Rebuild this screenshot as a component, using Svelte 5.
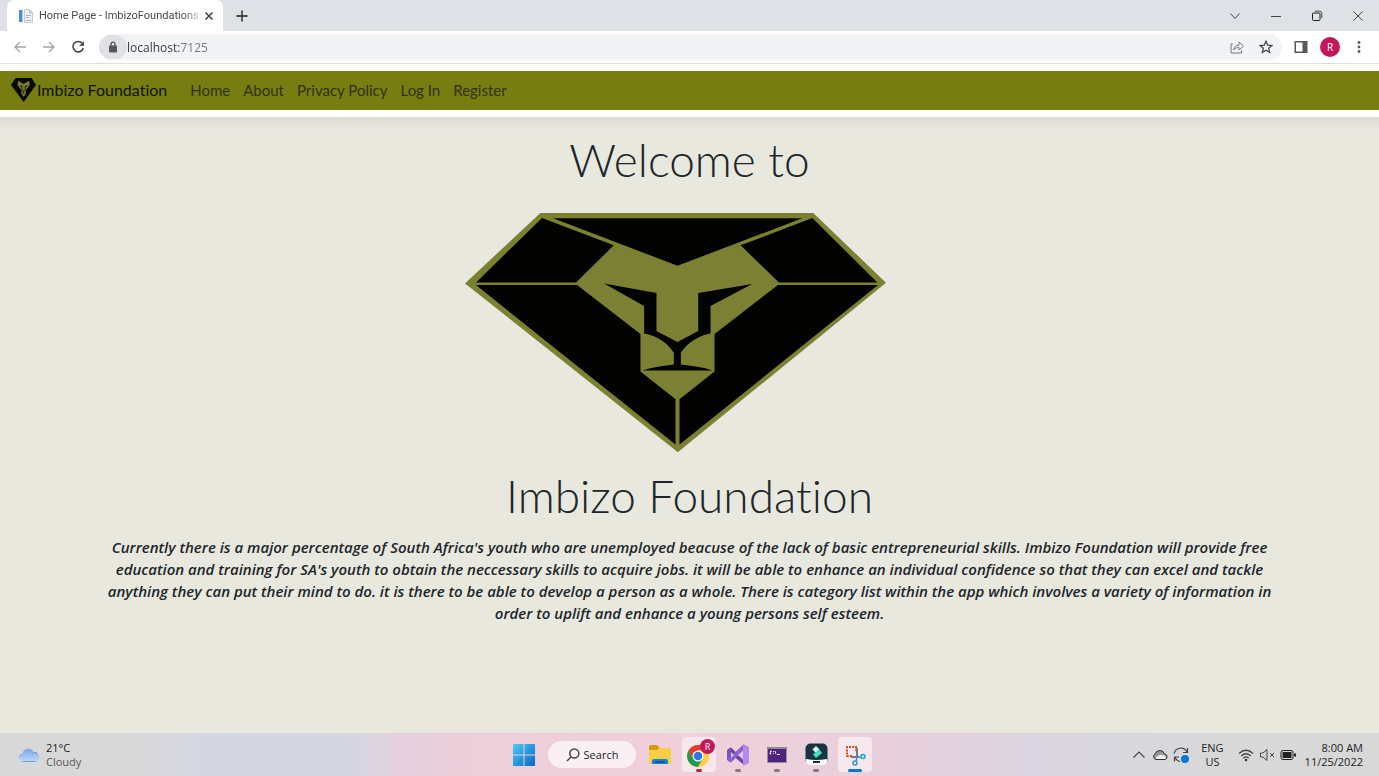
<script lang="ts">
  const links = ['Home', 'About', 'Privacy Policy', 'Log In', 'Register'];
  let address = $state('localhost:7125');
</script>

{#snippet features()}
  <path
    fill="#020300"
    d="M463 460L620 489V603L683 636L745 603V489L907 462L782 528V610C745 617 713 637 693 668V703C725 706 760 711 789 721H578C608 711 640 706 672 703V668C653 637 621 617 583 610V528Z"
  />
{/snippet}

<div class="screen">
  <header class="browser">
    <div class="tabs">
      <div class="tab">
        <svg width="16" height="16" viewBox="0 0 16 16" aria-hidden="true">
          <path fill="#3d93d5" d="M1 2h3v12H1z" /><path fill="#a9cdea" d="M4 2h1v12H4z" />
          <path fill="#eef1f4" stroke="#c6ccd2" d="M6.500 1.500h5l3 3v10h-8z" />
          <path fill="none" stroke="#aab4bf" d="M11.500 2v3h3M8 7.500h5M8 9.500h3M8 12.500h5" />
        </svg>
        <span class="title">Home Page - ImbizoFoundations</span>
        <button aria-label="Close tab">
          <svg width="10" height="10" viewBox="0 0 10 10"><path class="line" stroke-width="1.600" d="M1.500 1.500l7 7M8.500 1.500l-7 7" /></svg>
        </button>
      </div>
      <button class="plus" aria-label="New tab">
        <svg width="14" height="14" viewBox="0 0 14 14"><path class="line" stroke-width="1.800" d="M7 1.500v11M1.500 7h11" /></svg>
      </button>
      <div class="window">
        <button aria-label="Search tabs"><svg width="12" height="12" viewBox="0 0 12 12"><path class="line" d="M1.500 3.500L6 8.500l4.500-5" /></svg></button>
        <button aria-label="Minimize"><svg width="12" height="12" viewBox="0 0 12 12"><path class="line" d="M1 6.500h10" /></svg></button>
        <button aria-label="Restore"><svg width="12" height="12" viewBox="0 0 12 12"><rect class="line dark" x="1.500" y="3" width="7.500" height="7.500" rx="1" /><path class="line" d="M4 1.200h4.500q2.300 0 2.300 2.300V8" /></svg></button>
        <button aria-label="Close window"><svg width="12" height="12" viewBox="0 0 12 12"><path class="line" d="M1.500 1.500l9 9M10.500 1.500l-9 9" /></svg></button>
      </div>
    </div>

    <div class="toolbar">
      <button class="faded" aria-label="Back"><svg width="14" height="14" viewBox="0 0 14 14"><path class="line" stroke-width="1.300" d="M13 7H2M7 2L2 7l5 5" /></svg></button>
      <button class="faded" aria-label="Forward"><svg width="14" height="14" viewBox="0 0 14 14"><path class="line" stroke-width="1.300" d="M1 7h11M7 2l5 5-5 5" /></svg></button>
      <button aria-label="Reload">
        <svg width="14" height="14" viewBox="0 0 14 14"><path class="line" stroke-width="1.600" d="M11.300 3.500A5.200 5.200 0 1 0 12.200 8" /><path fill="#55585c" d="M13 1v5H8z" /></svg>
      </button>
      <div class="omnibox">
        <button class="lock" aria-label="Site information">
          <svg width="10" height="12" viewBox="0 0 10 12"><rect x="1" y="4.500" width="8" height="7" rx="1" fill="#55585c" /><path class="line" stroke-width="1.200" d="M3 5V3.200a2 2 0 0 1 4 0V5" /></svg>
        </button>
        <input aria-label="Address" bind:value={address} spellcheck="false" />
        <button aria-label="Share">
          <svg width="14" height="14" viewBox="0 0 14 14"><path class="line soft" d="M3 4H1v9h10.500v-3M3.500 10C4 6.500 6 5.300 9 5.200V2L13.500 6 9 10V7.500C6.500 7.500 5 8.200 3.500 10z" /></svg>
        </button>
        <button aria-label="Bookmark">
          <svg width="14" height="14" viewBox="0 0 14 14"><path class="line" stroke-width="1.300" d="M7 1.300l1.700 3.800 4.200.4-3.200 2.800.9 4.100L7 10.300l-3.600 2.100.9-4.100L1.100 5.500l4.200-.4z" /></svg>
        </button>
      </div>
      <button aria-label="Side panel">
        <svg width="14" height="14" viewBox="0 0 14 14"><path fill="#55585c" fill-rule="evenodd" d="M.5 1h13v12H.5zM2 2.500v9h6.500v-9z" /></svg>
      </button>
      <button class="avatar" aria-label="Profile">R</button>
      <button aria-label="Menu">
        <svg width="14" height="14" viewBox="0 0 14 14"><g fill="#55585c"><circle cx="7" cy="2.500" r="1.400" /><circle cx="7" cy="7" r="1.400" /><circle cx="7" cy="11.500" r="1.400" /></g></svg>
      </button>
    </div>
  </header>

  <nav>
    <a class="brand" href="#home">
      <svg width="25" height="24" viewBox="46 249 1262 717" preserveAspectRatio="none" aria-hidden="true">
        <path fill="#080a02" d="M272 249H1090L1308 458L684 966L46 460Z" />
        <path fill="#7c8033" d="M400 330L683 430L960 330L987 460L794 612V724L684 810L572 724V612L379 460Z" />
        {@render features()}
      </svg>
      <span>Imbizo Foundation</span>
    </a>
    {#each links as link}
      <a href="#{link.toLowerCase().replace(' ', '-')}">{link}</a>
    {/each}
  </nav>

  <main>
    <h1>Welcome to</h1>
    <svg class="logo" viewBox="46 249 1262 717" role="img" aria-label="Imbizo lion">
      <path fill="#7c8033" d="M272 249H1090L1308 458L684 966L46 460Z" />
      <g fill="#020300">
        <path d="M277 264L492 346L379 457H79Z" />
        <path d="M310 265H1057L683 407Z" />
        <path d="M1087 264L872 346L987 457H1282Z" />
        <path d="M79 465H382L572 612V724L677 807V943Z" />
        <path d="M1284 465H984L794 612V724L689 807V943Z" />
      </g>
      {@render features()}
    </svg>
    <h1>Imbizo Foundation</h1>
    <p>
      Currently there is a major percentage of South Africa's youth who are unemployed beacuse of the lack of basic
      entrepreneurial skills. Imbizo Foundation will provide free education and training for SA's youth to obtain the
      neccessary skills to acquire jobs. it will be able to enhance an individual confidence so that they can excel and
      tackle anything they can put their mind to do. it is there to be able to develop a person as a whole. There is
      category list within the app which involves a variety of information in order to uplift and enhance a young
      persons self esteem.
    </p>
  </main>

  <footer>
    <button class="weather">
      <svg width="22" height="16" viewBox="0 0 22 16" aria-hidden="true">
        <defs><linearGradient id="cloud" x2="0" y2="1"><stop stop-color="#77a5ea" /><stop offset="1" stop-color="#c3daf8" /></linearGradient></defs>
        <path fill="url(#cloud)" d="M5 15a4.300 4.300 0 0 1-.5-8.600A6 6 0 0 1 15.700 5 5 5 0 1 1 17 15z" />
        <path fill="none" stroke="#6d9be6" d="M4 14.500h13.500M14 6.500q2-2 5-.5" />
      </svg>
      <span>21°C<br /><small>Cloudy</small></span>
    </button>

    <div class="apps">
      <button aria-label="Start">
        <svg width="22" height="22" viewBox="0 0 22 22">
          <defs><linearGradient id="win" x2="1" y2="1"><stop stop-color="#4ccbf5" /><stop offset="1" stop-color="#0668c5" /></linearGradient></defs>
          <path fill="url(#win)" d="M1 0h9.500v10.500H0V1q0-1 1-1zM11.500 0H21q1 0 1 1v9.500H11.500zM0 11.500h10.500V22H1q-1 0-1-1zM11.500 11.500H22V21q0 1-1 1h-9.500z" />
        </svg>
      </button>
      <button class="search">
        <svg width="14" height="14" viewBox="0 0 14 14"><circle class="line" cx="8.300" cy="5.500" r="4.500" stroke-width="1.500" /><path class="line" stroke-width="1.500" d="M5 9l-4 4" /></svg>
        Search
      </button>
      <button aria-label="File Explorer">
        <svg width="24" height="24" viewBox="0 0 24 24">
          <path fill="#d99a08" d="M1 4q0-2 2-2h6l3 3h8v5H1z" />
          <path fill="#fbcf45" d="M1 7h8l2-2h10q2 0 2 2v13q0 1-1 1H2q-1 0-1-1z" />
          <path fill="#1681d5" d="M4 21v-3q0-2 2-2h12q2 0 2 2v3z" /><path fill="#075cae" d="M7 18h10v2H7z" />
        </svg>
      </button>
      <button class="open chrome" aria-label="Chrome">
        <svg width="28" height="28" viewBox="0 0 28 28">
          <circle cx="13" cy="15" r="11" fill="#ffce43" />
          <path fill="#e33b2e" d="M3.500 9.500A11 11 0 0 1 22.500 9.500H13L8.200 17.700z" />
          <path fill="#219a50" d="M3.500 9.500A11 11 0 0 0 13 26L17.800 17.800 8.200 17.700z" />
          <path fill="#ffce43" d="M22.500 9.500A11 11 0 0 1 13 26L17.800 17.800 13 9.500z" />
          <circle cx="13" cy="15" r="5.500" fill="#fff" /><circle cx="13" cy="15" r="4.300" fill="#2879ea" />
        </svg>
        <span class="badge">R</span>
      </button>
      <button class="running" aria-label="Visual Studio">
        <svg width="24" height="24" viewBox="0 0 24 24">
          <path fill="#6b3fa5" d="M2 6l3-1.500L18 17v5L5 11 2 8z" /><path fill="#7b52b9" d="M1 7l4-2.500v15L1 17z" />
          <path fill="#8b62ca" d="M2 18l3 1.500L18 7V1L2 16z" /><path fill="#b58be9" d="M17 1l6 3v16l-6 3V17l-5-5 5-5z" />
          <path fill="#dcc8ec" d="M5 9l3 3-3 3zM17 8v8l-5-4z" />
        </svg>
      </button>
      <button class="running" aria-label="Terminal">
        <svg width="20" height="16" viewBox="0 0 20 16">
          <rect x=".5" y=".5" width="19" height="15" fill="#4f2380" stroke="#969099" /><path fill="#8d8792" d="M0 0h20v2H0z" />
          <path fill="none" stroke="#eee" d="M5 4H3.500L3 7h1.500M6.500 4v1M6.500 6v1M8 4l1 3M10 7.500h3" />
        </svg>
      </button>
      <button class="running" aria-label="Filmora">
        <svg width="23" height="23" viewBox="0 0 23 23">
          <rect x=".5" y=".5" width="22" height="21" rx="5" fill="#173541" />
          <path fill="#fff" d="M1 16q10 2 21 0v2q0 4-5 4H6q-5 0-5-4z" /><path fill="#162c36" d="M8 18h7v2H8z" />
          <path fill="#e7fffb" d="M11 3l3.500 3.500L11 10 7.500 6.500z" /><path fill="#42dfbd" d="M14 6l3 4-6 5-3-3.500z" />
        </svg>
      </button>
      <button class="open" aria-label="Snipping Tool">
        <svg width="22" height="22" viewBox="0 0 22 22">
          <path fill="none" stroke="#d64a20" stroke-width="2" stroke-dasharray="2 1.200" d="M8 12H3V3h9v4" />
          <path fill="none" stroke="#767b80" stroke-width="2" d="M13 4v10M7 13h8" />
          <g fill="none" stroke="#239bdd" stroke-width="1.500"><path d="M14 13l3 0M13 14l-1 3" /><circle cx="19" cy="12.500" r="2" /><circle cx="11" cy="19" r="2" /></g>
        </svg>
      </button>
    </div>

    <div class="tray">
      <button aria-label="Hidden icons"><svg width="16" height="16" viewBox="0 0 16 16"><path class="line" stroke-width="1.200" d="M2.500 10.500L8 5l5.500 5.500" /></svg></button>
      <button aria-label="OneDrive"><svg width="16" height="16" viewBox="0 0 16 16"><path fill="#999" stroke="#333" d="M4 12.500A3 3 0 0 1 3 7q1-3.500 5-3.500 3.500 0 4.500 3.500a2.800 2.800 0 0 1 .5 5.500z" /><path fill="#eee" d="M4 12q0-3 4-4 3-.5 5 1 2 1.500 0 3z" /></svg></button>
      <button aria-label="Updates"><svg width="16" height="16" viewBox="0 0 16 16"><path class="line" stroke-width="1.200" d="M1 6.500a7 7 0 0 1 13-1.500M14.500 1v4.500H10M7 14.500A7 7 0 0 1 2 10.500M1.500 14.500v-4.500H6" /><circle cx="12" cy="12" r="4" fill="#0878d7" /></svg></button>
      <button class="text lang">ENG<br />US</button>
      <button aria-label="Network"><svg width="16" height="16" viewBox="0 0 16 16"><path class="line" stroke-width="1.200" d="M1 6.500q7-6.500 14 0M3.200 9q4.800-4.500 9.600 0M5.300 11.200q2.700-2.500 5.400 0" /><circle cx="8" cy="13" r="1.300" fill="#333" /></svg></button>
      <button aria-label="Volume"><svg width="16" height="16" viewBox="0 0 16 16"><path class="line" d="M1.500 6h2.500l4-3.500v11L4 10H1.500zM11 6l4 4M15 6l-4 4" /></svg></button>
      <button aria-label="Battery"><svg width="16" height="16" viewBox="0 0 16 16"><rect class="line dark" x="1" y="3.500" width="12" height="9" rx="2" /><path fill="#222" d="M2.500 5h9v6h-9zM14 6.500h2v3h-2z" /></svg></button>
      <button class="text clock">8:00 AM<br />11/25/2022</button>
    </div>
  </footer>
</div>

<style>
  :global(body) { margin: 0; }
  .screen { min-height: 100vh; display: flex; flex-direction: column; background: #fff; font-family: "Open Sans", "Noto Sans", sans-serif; color: #212529; }
  button { display: flex; align-items: center; justify-content: center; padding: 0; border: 0; background: none; color: #222; font: inherit; }
  svg { display: block; flex: none; }
  .line { fill: none; stroke: #44474a; }
  .dark { stroke: #1c1d1f; }
  .soft { stroke: #76797d; }
  .tabs { display: flex; align-items: center; height: 31px; background: #dee1e6; }
  .tab { display: flex; align-items: center; align-self: stretch; gap: 5px; width: 195px; margin-left: 7px; padding: 0 10px 0 11px; border-radius: 7px 7px 0 0; background: #fff; }
  .title { flex: 1; white-space: nowrap; font: 11px/16px Roboto, "Noto Sans", sans-serif; color: #45494d; mask-image: linear-gradient(to right, #000 90%, #0004); }
  .plus { margin-left: 12px; }
  .window { display: flex; gap: 29px; margin-left: auto; padding-right: 15px; }
  .toolbar { display: flex; align-items: center; gap: 15px; height: 32px; padding: 0 13px; border-bottom: 1px solid #dcdee0; }
  .faded { opacity: 0.5; }
  .omnibox { flex: 1; display: flex; align-items: center; gap: 15px; height: 26px; margin: 0 -3px 0 -1px; padding-right: 9px; border-radius: 13px; background: #f1f3f4; }
  .lock { width: 28px; height: 24px; border-radius: 12px; background: #dfe1e4; }
  input { flex: 1; min-width: 0; margin-left: -15px; padding: 0; border: 0; outline: 0; font: 12px "Open Sans", "Noto Sans", sans-serif; color: transparent; background: linear-gradient(to right, #33363a 52px, #73777b 52px) text; }
  .avatar { width: 20px; height: 20px; margin: 0 -3px; border-radius: 50%; background: #c2185b; color: #fff; font-size: 10px; }
  nav { display: flex; align-items: center; gap: 13px; height: 39px; box-sizing: border-box; margin: 7px 0; padding: 0 11px 2px; background: #777d10; font: 15px Lato, "Noto Sans", sans-serif; }
  nav a { color: #303216; text-decoration: none; }
  nav .brand { display: flex; align-items: center; gap: 1px; margin-right: 10px; font-size: 16px; color: #10120a; }
  main { flex: 1; display: flex; flex-direction: column; align-items: center; padding: 15px 96px 24px; background: linear-gradient(#dcdcd5, #e8e8df 14px); }
  h1 { margin: 0; font: 300 46px/56px Lato, "Noto Sans", sans-serif; }
  .brand, h1 { font-variant-ligatures: none; }
  .logo { width: 421px; max-width: 100%; height: auto; margin: 25px 28px 16px 0; }
  p { max-width: 1172px; margin: 12px 0 0; font-size: 15px; line-height: 22px; font-weight: 600; font-style: italic; text-align: center; }
  footer { display: grid; grid-template-columns: 1fr auto 1fr; align-items: center; height: 43px; background: linear-gradient(to right, #d8d8d8 9%, #d5d6e3 15%, #d6d6e1 26%, #e5d1e0 29%, #ebcfda 33%, #f0d0da 50%, #e8d0dc 65%, #dcd5e2 75%, #d8d8dd 82%, #d8d8d8 90%); }
  .weather { justify-self: start; gap: 6px; padding-left: 18px; text-align: left; font-size: 11px; line-height: 14px; }
  small { font-size: 11px; color: #5a5a5e; }
  .apps { display: flex; align-items: center; gap: 5px; }
  .apps button { position: relative; width: 34px; height: 35px; border-radius: 4px; }
  .apps .open { background: #f7e8ed; }
  .apps .search { gap: 4px; width: 88px; height: 27px; margin: 0 2px; border-radius: 14px; background: #faf0f3; font-size: 11px; }
  .running::after, .open::after { content: ""; position: absolute; bottom: 0; left: 50%; width: 6px; height: 3px; border-radius: 2px; background: #85797f; transform: translateX(-50%); }
  .open::after { width: 14px; background: #0878d7; }
  .chrome::after { width: 6px; background: #c4202b; }
  .badge { position: absolute; top: 2px; right: 1px; width: 15px; border-radius: 50%; background: #c2185b; color: #fff; font-size: 9px; line-height: 15px; }
  .tray { justify-self: end; display: flex; align-items: center; gap: 5px; padding-right: 16px; }
  .text { font-size: 11px; line-height: 14px; }
  .lang { margin: 0 9px 0 7px; }
  .clock { margin-left: 4px; text-align: right; }
</style>
